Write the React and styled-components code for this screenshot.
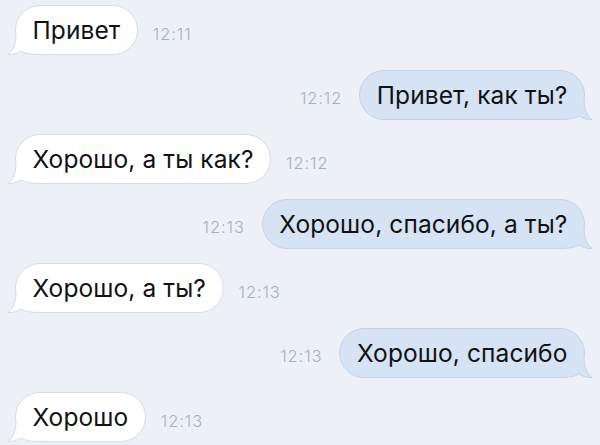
import React from 'react';
import styled, { createGlobalStyle } from 'styled-components';

const GlobalStyle = createGlobalStyle`
  html, body {
    margin: 0;
    padding: 0;
    background: #edf1f7;
  }
  body {
    font-family: Inter, "Noto Sans", sans-serif;
    -webkit-font-smoothing: antialiased;
  }
`;

const themes = {
  in: { fill: '#ffffff', stroke: '#d6dce5' },
  out: { fill: '#d5e3f5', stroke: '#c3d3e9' },
};

const Chat = styled.div`
  width: 600px;
  height: 445px;
  overflow: hidden;
  box-sizing: border-box;
  padding: 5px 15px 0 15px;
  display: flex;
  flex-direction: column;
  gap: 14.5px;
  background: #edf1f7;
`;

const Row = styled.div`
  display: flex;
  align-items: center;
  justify-content: ${(p) => (p.$out ? 'flex-end' : 'flex-start')};
  gap: ${(p) => (p.$out ? '17px' : '15px')};
`;

const Bubble = styled.div`
  position: relative;
  box-sizing: border-box;
  height: 50px;
  padding: 0 16.5px;
  display: flex;
  align-items: center;
  border-radius: 25px;
  border: 1px solid ${(p) => themes[p.$kind].stroke};
  background: ${(p) => themes[p.$kind].fill};
  color: #111214;
  font-size: 24.5px;
  font-weight: 400;
  letter-spacing: 0.1px;
  white-space: nowrap;
`;

const Text = styled.span`
  position: relative;
`;

const Time = styled.span`
  padding-top: 7px;
  color: #aab0ba;
  font-size: 16.5px;
  font-weight: 300;
  letter-spacing: 0.9px;
`;

const TailSvg = styled.svg`
  position: absolute;
  bottom: -1px;
  ${(p) => (p.$out ? 'right: -9px; transform: scaleX(-1);' : 'left: -9px;')}
  width: 36px;
  height: 20px;
  overflow: visible;
`;

const Tail = ({ kind }) => {
  const t = themes[kind];
  return (
    <TailSvg $out={kind === 'out'} viewBox="0 0 36 20">
      <path
        d="M9 0 C9 9 6 16 1 19.5 C5 20 10 18.5 14 16 C18 18.5 24 19.5 34 19.5 L34 0 Z"
        fill={t.fill}
      />
      <path
        d="M9 0 C9 9 6 16 1 19.5 C5 20 10 18.5 14 16 C18 18.5 24 19.5 34 19.5"
        fill="none"
        stroke={t.stroke}
        strokeWidth="1"
      />
    </TailSvg>
  );
};

const messages = [
  { kind: 'in', text: 'Привет', time: '12:11' },
  { kind: 'out', text: 'Привет, как ты?', time: '12:12' },
  { kind: 'in', text: 'Хорошо, а ты как?', time: '12:12' },
  { kind: 'out', text: 'Хорошо, спасибо, а ты?', time: '12:13' },
  { kind: 'in', text: 'Хорошо, а ты?', time: '12:13' },
  { kind: 'out', text: 'Хорошо, спасибо', time: '12:13' },
  { kind: 'in', text: 'Хорошо', time: '12:13' },
];

const Message = ({ kind, text, time }) => {
  const out = kind === 'out';
  return (
    <Row $out={out}>
      {out && <Time>{time}</Time>}
      <Bubble $kind={kind}>
        <Tail kind={kind} />
        <Text>{text}</Text>
      </Bubble>
      {!out && <Time>{time}</Time>}
    </Row>
  );
};

export default function App() {
  return (
    <>
      <GlobalStyle />
      <Chat>
        {messages.map((m, i) => (
          <Message key={i} {...m} />
        ))}
      </Chat>
    </>
  );
}
